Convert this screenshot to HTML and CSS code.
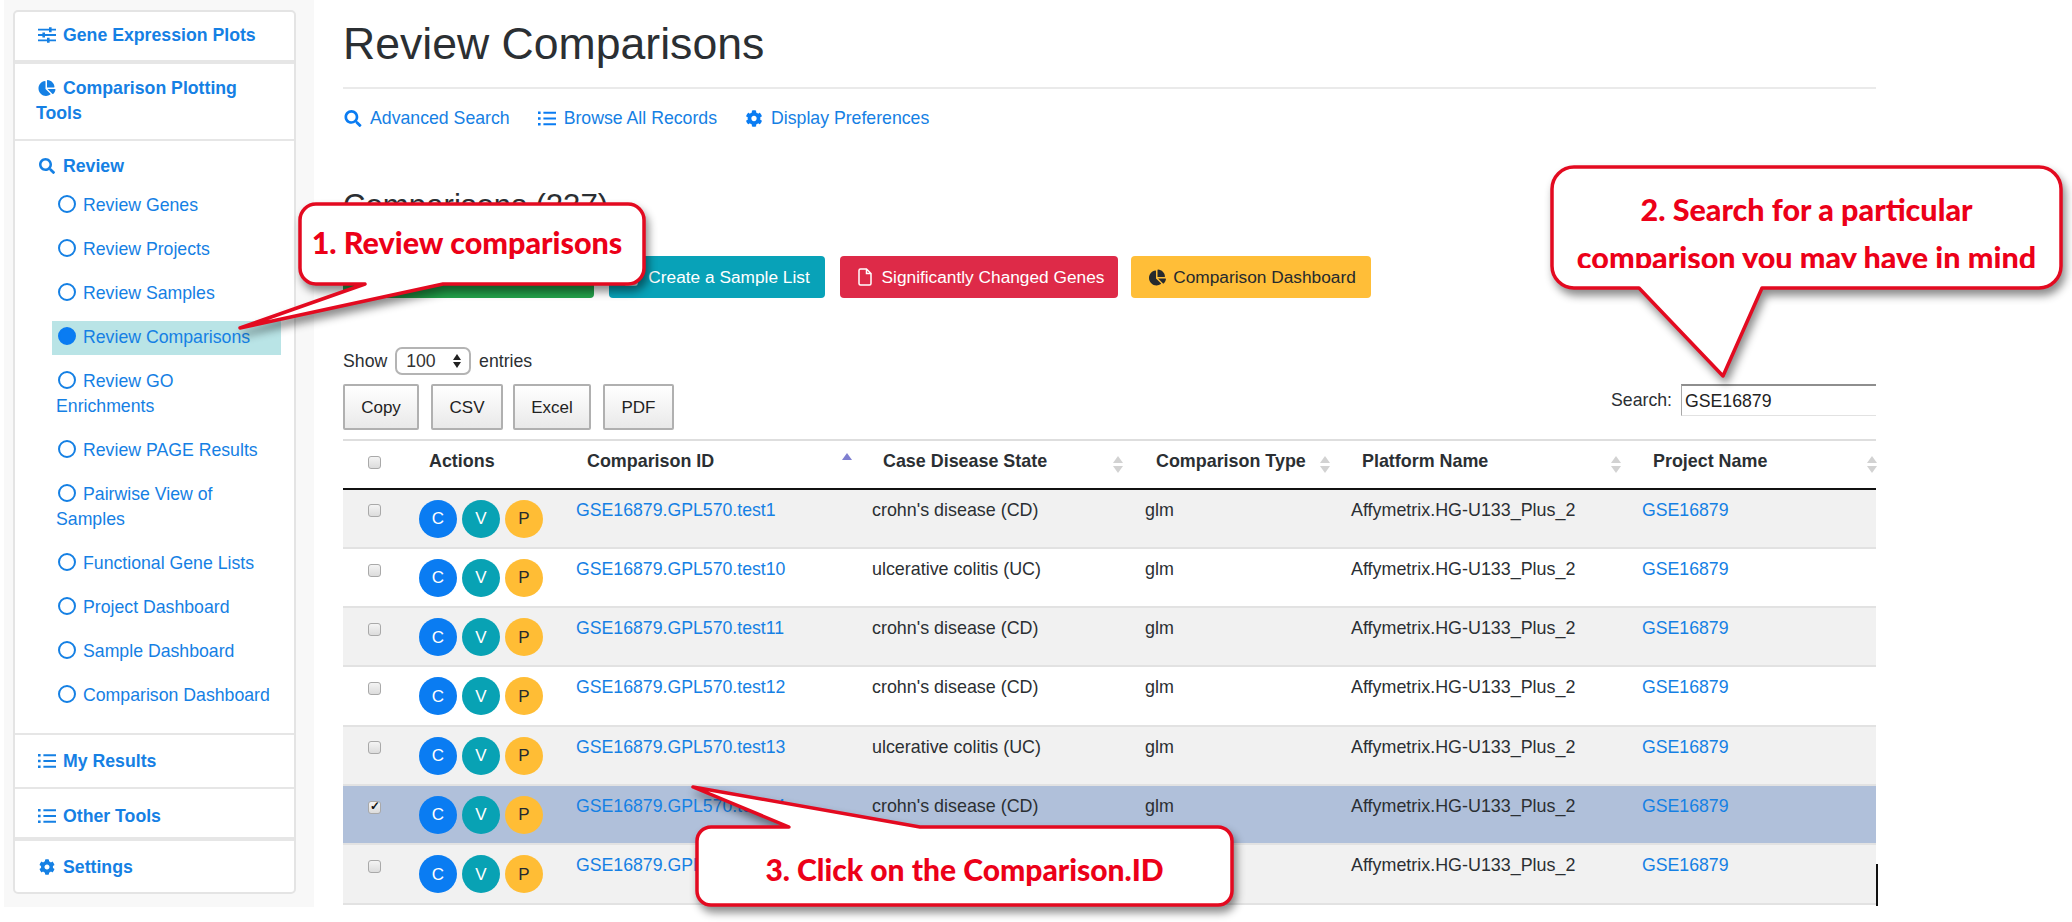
FILE: index.html
```html
<!DOCTYPE html>
<html lang="en">
<head>
<meta charset="utf-8">
<title>Review Comparisons</title>
<link rel="stylesheet" href="styles.css">
</head>
<body>
<svg class="defs" width="0" height="0" aria-hidden="true">
  <symbol id="i-search" viewBox="0 0 512 512"><path d="M505 442.7L405.3 343c-4.5-4.5-10.6-7-17-7H372c27.6-35.3 44-79.7 44-128C416 93.1 322.9 0 208 0S0 93.1 0 208s93.1 208 208 208c48.3 0 92.7-16.4 128-44v16.3c0 6.4 2.5 12.5 7 17l99.7 99.7c9.4 9.4 24.6 9.4 33.9 0l28.3-28.3c9.4-9.4 9.4-24.6.1-34zM208 336c-70.7 0-128-57.2-128-128 0-70.7 57.2-128 128-128 70.7 0 128 57.2 128 128 0 70.7-57.2 128-128 128z"/></symbol>
  <symbol id="i-pie" viewBox="0 0 544 512"><path d="M527.79 288H290.5l158.03 158.03c6.04 6.04 15.98 6.53 22.19.68 38.7-36.46 65.32-85.61 73.13-140.86 1.34-9.46-6.51-17.85-16.06-17.85zm-15.83-64.8C503.72 103.74 408.26 8.28 288.8.04 279.68-.59 272 7.1 272 16.24V240h223.77c9.14 0 16.82-7.68 16.19-16.8zM224 288V50.71c0-9.55-8.39-17.4-17.84-16.06C86.99 51.49-4.1 155.6.14 280.37 4.5 408.51 114.83 513.59 243.03 511.98c50.4-.63 96.97-16.87 135.26-44.03 7.9-5.6 8.42-17.23 1.57-24.08L224 288z"/></symbol>
  <symbol id="i-list" viewBox="0 0 18 16"><path d="M0 1h2.6v2.6H0zM0 6.7h2.6v2.6H0zM0 12.4h2.6V15H0zM5.4 1.3H18v2H5.4zM5.4 7H18v2H5.4zM5.4 12.7H18v2H5.4z"/></symbol>
  <symbol id="i-gear" viewBox="0 0 512 512"><path d="M487.4 315.7l-42.6-24.6c4.3-23.2 4.3-47 0-70.2l42.6-24.6c4.9-2.8 7.1-8.6 5.5-14-11.1-35.6-30-67.8-54.7-94.6-3.8-4.1-10-5.1-14.8-2.3L380.8 110c-17.9-15.4-38.5-27.3-60.8-35.1V25.8c0-5.6-3.9-10.5-9.4-11.7-36.7-8.2-74.3-7.8-109.2 0-5.5 1.2-9.4 6.1-9.4 11.7V75c-22.2 7.9-42.8 19.8-60.8 35.1L88.7 85.5c-4.9-2.8-11-1.9-14.8 2.3-24.7 26.7-43.6 58.9-54.7 94.6-1.7 5.4.6 11.2 5.5 14L67.3 221c-4.3 23.2-4.3 47 0 70.2l-42.6 24.6c-4.9 2.8-7.1 8.6-5.5 14 11.1 35.6 30 67.8 54.7 94.6 3.8 4.1 10 5.1 14.8 2.3l42.6-24.6c17.9 15.4 38.5 27.3 60.8 35.1v49.2c0 5.6 3.9 10.5 9.4 11.7 36.7 8.2 74.3 7.8 109.2 0 5.5-1.2 9.4-6.1 9.4-11.7v-49.2c22.2-7.9 42.8-19.8 60.8-35.1l42.6 24.6c4.9 2.8 11 1.9 14.8-2.3 24.7-26.7 43.6-58.9 54.7-94.6 1.5-5.5-.7-11.3-5.6-14.1zM256 336c-44.1 0-80-35.9-80-80s35.9-80 80-80 80 35.9 80 80-35.9 80-80 80z"/></symbol>
  <symbol id="i-sliders" viewBox="0 0 18 16"><path d="M0 1.800h18v1.800H0zM0 7.100h18v1.800H0zM0 12.400h18v1.800H0zM11 .2h2.600v5H11zM4.400 5.500H7v5H4.400zM9 10.800h2.600v5H9z"/></symbol>
  <symbol id="i-file" viewBox="0 0 14 18"><path fill="none" stroke="currentColor" stroke-width="1.500" d="M1 2.500A1.500 1.500 0 0 1 2.500 1H8.500L13 5.500V15.500A1.500 1.500 0 0 1 11.500 17H2.500A1.500 1.500 0 0 1 1 15.500ZM8.500 1V5.500H13"/></symbol>
</svg>

<div class="page">
  <aside class="sidebar">
    <ul class="panel">
      <li class="sec sec-first"><a class="head"><svg class="ic"><use href="#i-sliders"/></svg>Gene Expression Plots</a></li>
      <li class="sec sec-wrap"><a class="head"><svg class="ic"><use href="#i-pie"/></svg>Comparison Plotting Tools</a></li>
      <li class="sec sec-review">
        <a class="head"><svg class="ic"><use href="#i-search"/></svg>Review</a>
        <ul class="sub">
          <li><a class="sub-link"><span class="dot"></span>Review Genes</a></li>
          <li><a class="sub-link"><span class="dot"></span>Review Projects</a></li>
          <li><a class="sub-link"><span class="dot"></span>Review Samples</a></li>
          <li><a class="sub-link is-active"><span class="dot dot-on"></span>Review Comparisons</a></li>
          <li><a class="sub-link"><span class="dot"></span>Review GO Enrichments</a></li>
          <li><a class="sub-link"><span class="dot"></span>Review PAGE Results</a></li>
          <li><a class="sub-link"><span class="dot"></span>Pairwise View of Samples</a></li>
          <li><a class="sub-link"><span class="dot"></span>Functional Gene Lists</a></li>
          <li><a class="sub-link"><span class="dot"></span>Project Dashboard</a></li>
          <li><a class="sub-link"><span class="dot"></span>Sample Dashboard</a></li>
          <li><a class="sub-link"><span class="dot"></span>Comparison Dashboard</a></li>
        </ul>
      </li>
      <li class="sec sec-results"><a class="head"><svg class="ic"><use href="#i-list"/></svg>My Results</a></li>
      <li class="sec sec-tools"><a class="head"><svg class="ic"><use href="#i-list"/></svg>Other Tools</a></li>
      <li class="sec sec-settings"><a class="head"><svg class="ic"><use href="#i-gear"/></svg>Settings</a></li>
    </ul>
  </aside>

  <main class="main">
    <h1 class="title">Review Comparisons</h1>
    <nav class="links">
      <a class="link"><svg class="ic-s"><use href="#i-search"/></svg>Advanced Search</a>
      <a class="link"><svg class="ic-s"><use href="#i-list"/></svg>Browse All Records</a>
      <a class="link"><svg class="ic-s"><use href="#i-gear"/></svg>Display Preferences</a>
    </nav>
    <h2 class="subtitle">Comparisons (237)</h2>
    <div class="actions-row">
      <a class="btn btn-green"></a>
      <a class="btn btn-teal"><svg class="ic-f"><use href="#i-file"/></svg>Create a Sample List</a>
      <a class="btn btn-red"><svg class="ic-f"><use href="#i-file"/></svg>Significantly Changed Genes</a>
      <a class="btn btn-amber"><svg class="ic-p"><use href="#i-pie"/></svg>Comparison Dashboard</a>
    </div>
    <div class="toolbar">
      <div class="toolbar-left">
        <div class="length">Show <span class="select">100<span class="spin"></span></span> entries</div>
        <div class="export">
          <button class="ex ex-copy">Copy</button>
          <button class="ex ex-csv">CSV</button>
          <button class="ex ex-excel">Excel</button>
          <button class="ex ex-pdf">PDF</button>
        </div>
      </div>
      <div class="search">Search: <span class="search-box">GSE16879</span></div>
    </div>

    <div class="table-wrap">
    <table class="grid">
      <colgroup>
        <col class="c1"><col class="c2"><col class="c3"><col class="c4"><col class="c5"><col class="c6"><col class="c7">
      </colgroup>
      <thead>
        <tr>
          <th class="th-check"><input class="cb" type="checkbox"></th>
          <th class="th-actions">Actions</th>
          <th class="sort-asc">Comparison ID</th>
          <th class="sortable s-case">Case Disease State</th>
          <th class="sortable s-type">Comparison Type</th>
          <th class="sortable s-plat">Platform Name</th>
          <th class="sortable s-proj">Project Name</th>
        </tr>
      </thead>
      <tbody>
        <tr class="odd">
          <td class="td-check"><input class="cb" type="checkbox"></td>
          <td class="td-actions"><span class="round r-c">C</span><span class="round r-v">V</span><span class="round r-p">P</span></td>
          <td><a class="cell-link">GSE16879.GPL570.test1</a></td><td>crohn's disease (CD)</td><td>glm</td><td>Affymetrix.HG-U133_Plus_2</td><td><a class="cell-link">GSE16879</a></td>
        </tr>
        <tr>
          <td class="td-check"><input class="cb" type="checkbox"></td>
          <td class="td-actions"><span class="round r-c">C</span><span class="round r-v">V</span><span class="round r-p">P</span></td>
          <td><a class="cell-link">GSE16879.GPL570.test10</a></td><td>ulcerative colitis (UC)</td><td>glm</td><td>Affymetrix.HG-U133_Plus_2</td><td><a class="cell-link">GSE16879</a></td>
        </tr>
        <tr class="odd">
          <td class="td-check"><input class="cb" type="checkbox"></td>
          <td class="td-actions"><span class="round r-c">C</span><span class="round r-v">V</span><span class="round r-p">P</span></td>
          <td><a class="cell-link">GSE16879.GPL570.test11</a></td><td>crohn's disease (CD)</td><td>glm</td><td>Affymetrix.HG-U133_Plus_2</td><td><a class="cell-link">GSE16879</a></td>
        </tr>
        <tr>
          <td class="td-check"><input class="cb" type="checkbox"></td>
          <td class="td-actions"><span class="round r-c">C</span><span class="round r-v">V</span><span class="round r-p">P</span></td>
          <td><a class="cell-link">GSE16879.GPL570.test12</a></td><td>crohn's disease (CD)</td><td>glm</td><td>Affymetrix.HG-U133_Plus_2</td><td><a class="cell-link">GSE16879</a></td>
        </tr>
        <tr class="odd">
          <td class="td-check"><input class="cb" type="checkbox"></td>
          <td class="td-actions"><span class="round r-c">C</span><span class="round r-v">V</span><span class="round r-p">P</span></td>
          <td><a class="cell-link">GSE16879.GPL570.test13</a></td><td>ulcerative colitis (UC)</td><td>glm</td><td>Affymetrix.HG-U133_Plus_2</td><td><a class="cell-link">GSE16879</a></td>
        </tr>
        <tr class="selected">
          <td class="td-check"><input class="cb" type="checkbox" checked></td>
          <td class="td-actions"><span class="round r-c">C</span><span class="round r-v">V</span><span class="round r-p">P</span></td>
          <td><a class="cell-link">GSE16879.GPL570.test14</a></td><td>crohn's disease (CD)</td><td>glm</td><td>Affymetrix.HG-U133_Plus_2</td><td><a class="cell-link">GSE16879</a></td>
        </tr>
        <tr class="odd">
          <td class="td-check"><input class="cb" type="checkbox"></td>
          <td class="td-actions"><span class="round r-c">C</span><span class="round r-v">V</span><span class="round r-p">P</span></td>
          <td><a class="cell-link">GSE16879.GPL570.test15</a></td><td></td><td></td><td>Affymetrix.HG-U133_Plus_2</td><td><a class="cell-link">GSE16879</a></td>
        </tr>
      </tbody>
    </table>
    <span class="edge-mark"></span>
    </div>
  </main>
</div>

<svg class="callouts" viewBox="0 0 2072 922" aria-hidden="true">
  <path d="M316 204H628a16 16 0 0 1 16 16V268a16 16 0 0 1-16 16H443L240 328L365 284H316a16 16 0 0 1-16-16V220a16 16 0 0 1 16-16Z"/>
  <path d="M1574 167H2039a22 22 0 0 1 22 22V266a22 22 0 0 1-22 22H1762L1723 376L1639 288H1574a22 22 0 0 1-22-22V189a22 22 0 0 1 22-22Z"/>
  <path d="M711 827H789L693 787L920 827H1218a14 14 0 0 1 14 14V891a14 14 0 0 1-14 14H711a14 14 0 0 1-14-14V841a14 14 0 0 1 14-14Z"/>
</svg>
<div class="note note-1">1. Review comparisons</div>
<div class="note note-2a">2. Search for a particular</div>
<div class="note note-2b">comparison you may have in mind</div>
<div class="note note-3">3. Click on the Comparison.ID</div>
</body>
</html>
```

FILE: styles.css
```css
* { box-sizing: border-box; }
html, body { margin: 0; padding: 0; height: 922px; overflow: hidden; background: #fff; }
body { font-family: "Liberation Sans", Arial, sans-serif; font-size: 17.7px; line-height: 25px; color: #2b2f33; position: relative; }
.defs { position: absolute; }
a { color: #1580e4; text-decoration: none; }
ul { list-style: none; margin: 0; padding: 0; }

.page { display: flex; align-items: flex-start; padding-left: 4px; }

/* sidebar */
.sidebar { width: 310px; height: 907px; background: #f8f8f8; padding: 10px 18px 0 9px; flex: none; }
.panel { background: #fff; border: 2px solid #e4e4e4; border-radius: 5px; height: 884px; color: #1580e4; }
.sec { border-bottom: 2px solid #e6e6e6; }
.head { display: block; font-weight: 700; padding: 0 10px 0 23px; }
.ic { width: 18px; height: 16px; fill: currentColor; margin-right: 7px; vertical-align: -2px; }
.sec-first { height: 52px; padding-top: 11px; border-bottom-width: 4px; }
.sec-wrap { height: 77px; padding-top: 12px; }
.sec-wrap .head { padding-left: 21px; padding-right: 10px; }
.sec-wrap .ic { margin-left: 2px; }
.sec-review { height: 594px; padding-top: 13px; }
.sec-results { height: 54px; padding-top: 14px; }
.sec-tools { height: 52px; padding-top: 15px; border-bottom-width: 4px; }
.sec-settings { border: 0; padding-top: 14px; }
.sub { padding: 10.2px 13px 0 37px; }
.sub li { margin-bottom: 10px; }
.sub-link { display: block; padding: 4px 8px 5px 4px; line-height: 25px; }
.sub-link.is-active { background: #b9e4e6; height: 34px; }
.dot { display: inline-block; width: 18px; height: 18px; border: 2px solid #1580e4; border-radius: 50%; margin: 0 7px 0 2px; vertical-align: -2px; }
.dot-on { background: #0a7cf2; border-color: #0a7cf2; }

/* main */
.main { width: 1533px; margin-left: 29px; flex: none; }
.title { font-size: 44.6px; font-weight: 400; line-height: 88px; height: 89px; margin: 0; border-bottom: 2px solid #eaeaea; }
.links { display: flex; height: 58px; align-items: center; gap: 27px; }
.link { display: flex; align-items: center; }
.ic-s { width: 18px; height: 17px; fill: #0a7cf2; margin: 0 8px 0 1px; }
.subtitle { font-size: 31.2px; font-weight: 400; line-height: 40px; margin: 39px 0 0; }
.actions-row { display: flex; gap: 15px; margin-top: 30px; font-size: 17.3px; }
.actions-row .btn { height: 42px; display: flex; align-items: center; justify-content: center; border-radius: 4px; color: #fff; flex: none; }
.btn-green { width: 251px; background: #22a24a; }
.btn-teal { width: 216px; background: #08a2b8; }
.btn-red { width: 278px; background: #de2a48; }
.actions-row .btn-amber { width: 240px; background: #ffbe38; color: #262a2e; margin-left: -2px; }
.ic-f { width: 14px; height: 18px; color: #fff; margin-right: 10px; }
.btn-red .ic-f { margin-left: 4px; }
.ic-p { width: 17px; height: 17px; fill: #262a2e; margin: 0 7px 0 3px; }

.toolbar { display: flex; justify-content: space-between; margin-top: 49px; height: 92px; }
.length { height: 28px; line-height: 28px; }
.select { display: inline-block; width: 76px; height: 28px; line-height: 24px; border: 2px solid #b4b4b4; border-radius: 7px; padding-left: 9px; margin: 0 3px; position: relative; vertical-align: top; color: #333; }
.spin::before, .spin::after { content: ""; position: absolute; right: 8px; border-left: 4px solid transparent; border-right: 4px solid transparent; }
.spin::before { top: 5px; border-bottom: 6px solid #222; }
.spin::after { bottom: 5px; border-top: 6px solid #222; }
.export { display: flex; margin-top: 9px; }
.ex { height: 46px; font: inherit; font-size: 17px; color: #222; border: 2px solid #b0b0b0; border-radius: 2px; background: linear-gradient(#fff, #e9e9e9); padding: 0; }
.ex-copy { width: 76px; margin-right: 12px; }
.ex-csv { width: 72px; margin-right: 10px; }
.ex-excel { width: 78px; margin-right: 12px; }
.ex-pdf { width: 71px; }
.search { display: flex; align-items: center; gap: 9px; height: 32px; margin-top: 37px; }
.search-box { width: 195px; height: 32px; line-height: 30px; padding-left: 3px; border-top: 2px solid #8e8e8e; border-left: 1px solid #a8a8a8; border-bottom: 1px solid #e2e2e2; color: #222; }

/* table */
.table-wrap { position: relative; }
.grid { width: 1533px; table-layout: fixed; border-collapse: separate; border-spacing: 0; border-top: 2px solid #dedede; }
.c1 { width: 66px; } .c2 { width: 155px; } .c3 { width: 296px; } .c4 { width: 273px; } .c5 { width: 206px; } .c6 { width: 291px; } .c7 { width: 246px; }
th { height: 48.5px; text-align: left; font-weight: 700; font-size: 17.9px; padding: 0 0 6px 23px; border-bottom: 2px solid #111; position: relative; white-space: nowrap; }
th.th-actions { padding-left: 20px; }
th.th-check { padding: 0 4px 6px 0; text-align: center; }
td.td-check { padding: 8px 4px 0 0; text-align: center; }
td { height: 59.3px; padding: 8px 12px 0; vertical-align: top; border-bottom: 2px solid #e2e2e2; font-size: 17.9px; white-space: nowrap; }
tr.odd td { background: #f1f1f1; }
tr.selected td { background: #b0c0da; }
.cell-link { color: #1580e4; font-size: 17.7px; }
td.td-actions { padding: 10px 0 0 10px; }
.round { display: inline-flex; width: 38px; height: 38px; border-radius: 50%; align-items: center; justify-content: center; margin-right: 5px; font-size: 17px; color: #fff; }
.r-c { background: #0a7cf2; }
.r-v { background: #08a2b4; }
.r-p { background: #ffbd35; color: #262a2e; }
.cb { appearance: none; width: 13px; height: 13px; margin: 0; border: 1px solid #a9a9a9; border-radius: 3px; background: linear-gradient(#f4f4f4, #dcdcdc); position: relative; vertical-align: middle; }
.cb:checked::after { content: "\2713"; position: absolute; left: 1px; top: -5px; font-size: 12px; font-weight: 700; color: #111; line-height: 18px; }
.sortable::before, .sortable::after, .sort-asc::before { content: ""; position: absolute; border-left: 5px solid transparent; border-right: 5px solid transparent; }
.sortable::before { top: 15px; border-bottom: 7px solid #d2d2d2; }
.sortable::after { top: 25px; border-top: 7px solid #d2d2d2; }
.sort-asc::before { right: 8px; top: 12px; border-bottom: 7px solid #7f7fd0; }
.s-case::before, .s-case::after { right: 10px; }
.s-type::before, .s-type::after { right: 9px; }
.s-plat::before, .s-plat::after { right: 9px; }
.s-proj::before, .s-proj::after { right: -1px; }
.edge-mark { position: absolute; left: 1533px; top: 425px; width: 2px; height: 42px; background: #111; }

/* annotation callouts */
.callouts { position: absolute; left: 0; top: 0; width: 2072px; height: 922px; fill: #fff; stroke: #e30a20; stroke-width: 3.500; stroke-linejoin: round; filter: drop-shadow(3px 6px 4px rgba(0,0,0,.45)); }
.note { position: absolute; font-family: Lato, "Open Sans", sans-serif; font-weight: 900; color: #ec0018; white-space: nowrap; text-align: center; font-size: 30.5px; line-height: 40px; }
.note-1 { left: 295px; width: 344px; top: 222px; }
.note-2a { left: 1552px; width: 509px; top: 189px; }
.note-2b { left: 1552px; width: 509px; top: 237px; height: 31px; overflow: hidden; }
.note-3 { left: 697px; width: 535px; top: 849px; font-size: 30px; }
```
